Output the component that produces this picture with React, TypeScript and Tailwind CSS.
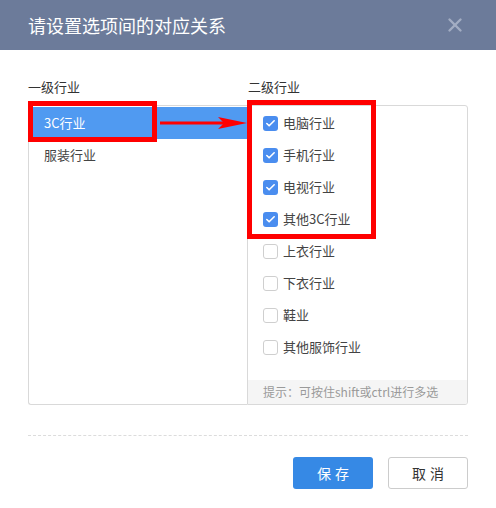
import { Check, X } from "lucide-react";

const level1 = ["3C行业", "服装行业"];
const level2 = [
  { name: "电脑行业", checked: true },
  { name: "手机行业", checked: true },
  { name: "电视行业", checked: true },
  { name: "其他3C行业", checked: true },
  { name: "上衣行业", checked: false },
  { name: "下衣行业", checked: false },
  { name: "鞋业", checked: false },
  { name: "其他服饰行业", checked: false },
];

export default function App() {
  return (
    <div
      className="relative w-[496px] h-[508px] bg-white overflow-hidden"
      style={{ fontFamily: '"Microsoft YaHei", "Noto Sans CJK SC", "Noto Sans", sans-serif' }}
    >
      {/* header */}
      <div className="h-[50px] bg-[#6c7b9a] flex items-center justify-between pl-[28px] pr-[30px]">
        <div className="text-white text-[18px] leading-none">请设置选项间的对应关系</div>
        <X className="w-[22px] h-[22px] text-[#a3adc3]" strokeWidth={2.6} />
      </div>

      <div className="px-[28px] pt-[27px]">
        <div className="flex text-[13px] leading-[20px] text-[#333]">
          <div className="w-[220px]">一级行业</div>
          <div>二级行业</div>
        </div>

        <div className="mt-[8px] flex h-[300px]">
          {/* left list */}
          <div className="w-[219px] border-l border-t border-b border-[#d9d9d9] rounded-l-[3px] pt-[1px]">
            {level1.map((name, i) => (
              <div
                key={name}
                className={
                  i === 0
                    ? "h-[32px] flex items-center pl-[15px] text-[13px] bg-[#509af1] text-white"
                    : "h-[32px] flex items-center pl-[15px] text-[13px] text-[#444]"
                }
              >
                {name}
              </div>
            ))}
          </div>

          {/* right list */}
          <div className="w-[221px] border border-[#d9d9d9] rounded-r-[3px] flex flex-col overflow-hidden">
            <div className="pt-[1px]">
              {level2.map((item) => (
                <div key={item.name} className="h-[32px] flex items-center pl-[15px] gap-[5px] text-[13px] text-[#444]">
                  {item.checked ? (
                    <span className="w-[15px] h-[15px] rounded-[3px] bg-[#4a8def] flex items-center justify-center">
                      <Check className="w-[11px] h-[11px] text-white" strokeWidth={3.5} />
                    </span>
                  ) : (
                    <span className="w-[15px] h-[15px] rounded-[3px] border border-[#cfcfcf] bg-white" />
                  )}
                  <span>{item.name}</span>
                </div>
              ))}
            </div>
            <div className="mt-auto h-[24px] bg-[#f5f5f5] flex items-center pl-[15px] text-[12px] text-[#9a9a9a]">
              提示：可按住shift或ctrl进行多选
            </div>
          </div>
        </div>

        <div className="mt-[30px] border-t border-dashed border-[#dcdcdc]" />

        <div className="mt-[21px] flex justify-end gap-[15px]">
          <button className="w-[80px] h-[32px] rounded-[3px] bg-[#3689e5] text-white text-[14px] tracking-[4px] pl-[4px]">
            保存
          </button>
          <button className="w-[80px] h-[32px] rounded-[3px] border border-[#cccccc] bg-white text-[#333] text-[14px] tracking-[4px] pl-[4px]">
            取消
          </button>
        </div>
      </div>

      {/* red annotations */}
      <div className="absolute left-[28px] top-[101px] w-[129px] h-[41px] border-[5px] border-[#ff0000]" />
      <div className="absolute left-[247px] top-[100px] w-[129px] h-[139px] border-[5px] border-[#ff0000]" />
      <svg className="absolute left-[158px] top-[116px]" width="90" height="14" viewBox="0 0 90 14">
        <line x1="2" y1="7" x2="66" y2="7" stroke="#ff0000" strokeWidth="3" />
        <polygon points="60,1 89,7 60,13 66,7" fill="#ff0000" />
      </svg>
    </div>
  );
}
